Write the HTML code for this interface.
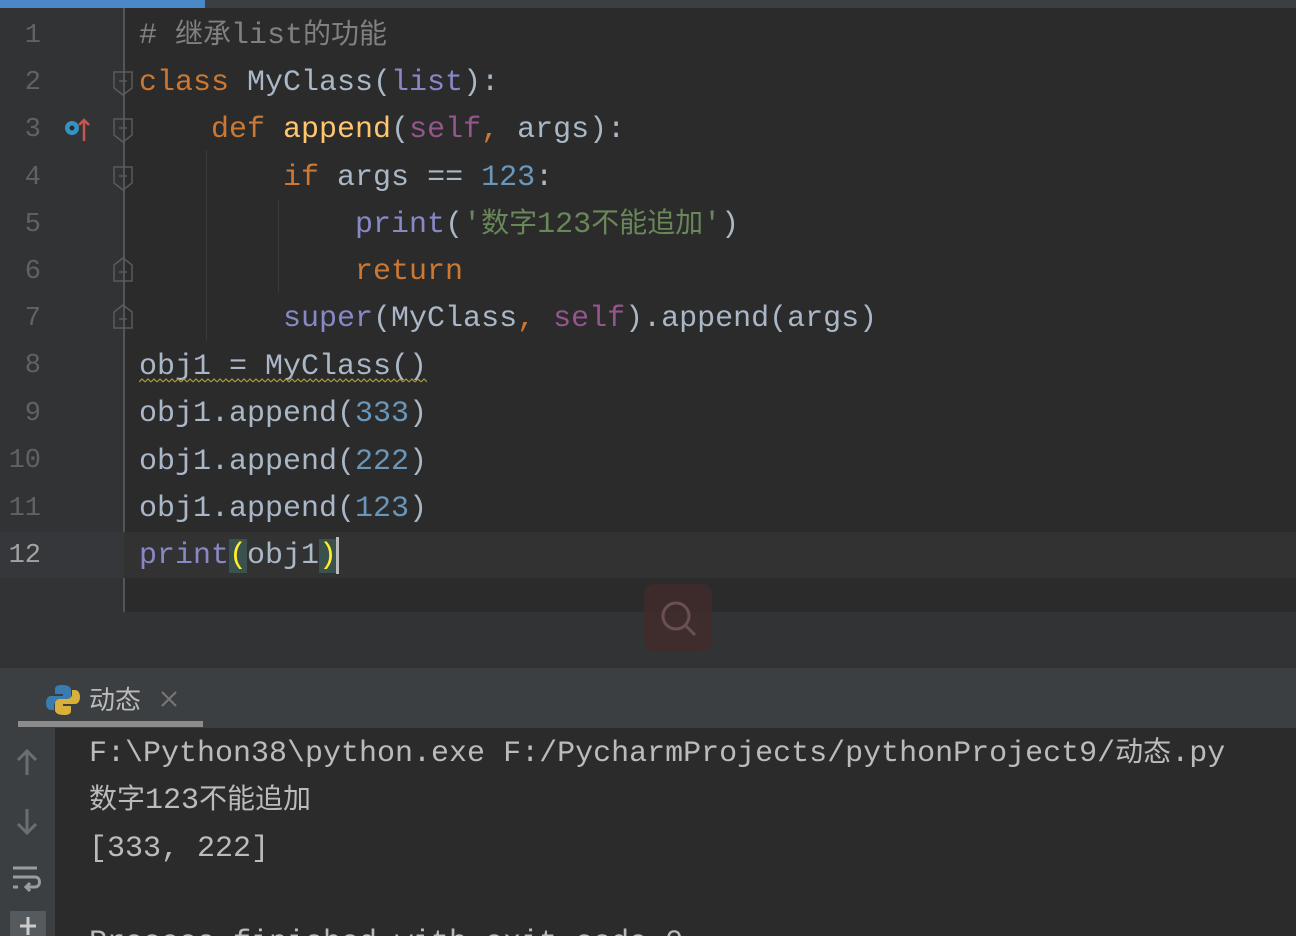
<!DOCTYPE html>
<html style="margin:0;height:936px;overflow:hidden"><head><meta charset="utf-8"><style>
body{margin:0;width:1296px;height:936px;overflow:hidden;background:#2b2b2b;position:relative;font-family:"Liberation Mono","Noto Sans CJK SC",monospace;}
.a{position:absolute}
.ln{position:absolute;left:0;width:41px;text-align:right;color:#606366;font-size:27px;font-family:"Liberation Mono",monospace;margin-top:3px}
.L{position:absolute;left:139px;font-size:30px;height:47px;line-height:47px;white-space:pre;color:#a9b7c6;margin-top:3px}
.k{color:#cc7832}.f{color:#ffc66d}.s{color:#94558d}.b{color:#8888c6}.n{color:#6897bb}.g{color:#6a8759}.c{color:#808080}
.cj{font-family:"Noto Sans CJK SC",sans-serif;font-size:28px;line-height:20px}
</style></head><body>
<div class="a" style="left:0;top:0;width:1296px;height:8px;background:#3c3f41"></div>
<div class="a" style="left:0;top:0;width:205px;height:8px;background:#4a88c7"></div>
<div class="a" style="left:0;top:8px;width:124px;height:604px;background:#313335"></div>
<div class="a" style="left:123px;top:8px;width:2px;height:604px;background:#555"></div>
<div class="a" style="left:0;top:532px;width:1296px;height:46px;background:#323232"></div>
<div class="a" style="left:0;top:532px;width:124px;height:46px;background:#35373a"></div>
<div class="a" style="left:206px;top:150px;width:1px;height:190px;background:#3b3b3b"></div>
<div class="a" style="left:278px;top:200px;width:1px;height:92px;background:#3b3b3b"></div>
<div class="ln" style="top:18px;">1</div>
<div class="ln" style="top:65px;">2</div>
<div class="ln" style="top:112px;">3</div>
<div class="ln" style="top:160px;">4</div>
<div class="ln" style="top:207px;">5</div>
<div class="ln" style="top:254px;">6</div>
<div class="ln" style="top:301px;">7</div>
<div class="ln" style="top:348px;">8</div>
<div class="ln" style="top:396px;">9</div>
<div class="ln" style="top:443px;">10</div>
<div class="ln" style="top:491px;">11</div>
<div class="ln" style="top:538px;color:#a4a3a3">12</div>
<svg class="a" style="left:60px;top:114px" width="34" height="30"><circle cx="12" cy="14" r="7" fill="#3592c4"/><circle cx="12" cy="14" r="2.5" fill="#2b2b2b"/><path d="M24 27V6M19 11l5-5 5 5" stroke="#c75450" stroke-width="2.5" fill="none"/></svg>
<svg class="a" style="left:112px;top:68px" width="24" height="270" fill="none" stroke="#5b5b5b" stroke-width="1.5">
<path d="M2 4h18v16l-9 7-9-7z M7 13h8"/><path d="M2 51h18v16l-9 7-9-7z M7 60h8"/><path d="M2 99h18v16l-9 7-9-7z M7 108h8"/>
<path d="M2 213h18v-16l-9-7-9 7z M7 204h8"/><path d="M2 260h18v-16l-9-7-9 7z M7 251h8"/></svg>
<div class="L" style="top:10px"><span class="c"># <span class="cj">继承</span>list<span class="cj">的功能</span></span></div>
<div class="L" style="top:57px"><span class="k">class</span> MyClass(<span class="b">list</span>):</div>
<div class="L" style="top:104px">    <span class="k">def</span> <span class="f">append</span>(<span class="s">self</span><span class="k">,</span> args):</div>
<div class="L" style="top:152px">        <span class="k">if</span> args == <span class="n">123</span>:</div>
<div class="L" style="top:199px">            <span class="b">print</span>(<span class="g">'<span class="cj">数字</span>123<span class="cj">不能追加</span>'</span>)</div>
<div class="L" style="top:246px">            <span class="k">return</span></div>
<div class="L" style="top:293px">        <span class="b">super</span>(MyClass<span class="k">,</span> <span class="s">self</span>).append(args)</div>
<div class="L" style="top:341px">obj1 = MyClass()</div>
<svg class="a" style="left:139px;top:378px" width="288" height="6"><defs><pattern id="w" width="6" height="6" patternUnits="userSpaceOnUse"><path d="M0 4l3-3 3 3" stroke="#a89b3a" stroke-width="1.2" fill="none"/></pattern></defs><rect width="288" height="6" fill="url(#w)"/></svg>
<div class="L" style="top:388px">obj1.append(<span class="n">333</span>)</div>
<div class="L" style="top:436px">obj1.append(<span class="n">222</span>)</div>
<div class="L" style="top:483px">obj1.append(<span class="n">123</span>)</div>
<div class="L" style="top:530px"><span class="b">print</span><span style="background:#3b514d;color:#ffef28">(</span>obj1<span style="background:#3b514d;color:#ffef28">)</span></div>
<div class="a" style="left:336px;top:537px;width:3px;height:37px;background:#bbb"></div>
<div class="a" style="left:0;top:612px;width:1296px;height:56px;background:#313335"></div>
<div class="a" style="left:644px;top:584px;width:68px;height:68px;background:#4a2a2a;border-radius:10px;opacity:.6"></div>
<svg class="a" style="left:656px;top:596px" width="44" height="44" fill="none" stroke="#6a5050" stroke-width="3"><circle cx="20" cy="20" r="13"/><path d="M30 30l9 9"/></svg>
<div class="a" style="left:0;top:668px;width:1296px;height:60px;background:#3c3f41"></div>
<div class="a" style="left:18px;top:721px;width:185px;height:6px;background:#8c8c8c"></div>
<svg class="a" style="left:46px;top:683px" width="34" height="34"><path d="M16 2c-7 0-7 3-7 5v4h8v2H5c-3 0-5 3-5 7s2 7 5 7h3v-4c0-3 2-5 5-5h7c3 0 5-2 5-5V7c0-3-3-5-9-5z" fill="#3a7cb0"/><path d="M18 32c7 0 7-3 7-5v-4h-8v-2h12c3 0 5-3 5-7s-2-7-5-7h-3v4c0 3-2 5-5 5h-7c-3 0-5 2-5 5v6c0 3 3 5 9 5z" fill="#d8b03a"/></svg>
<div class="a" style="left:89px;top:680px;font-size:26px;color:#bbb;font-family:'Noto Sans CJK SC',sans-serif">动态</div>
<svg class="a" style="left:160px;top:690px" width="18" height="18" stroke="#777" stroke-width="2"><path d="M2 2l14 14M16 2L2 16"/></svg>
<div class="a" style="left:0;top:728px;width:55px;height:208px;background:#3c3f41"></div>
<svg class="a" style="left:10px;top:745px" width="36" height="191" fill="none" stroke="#6b6e70" stroke-width="3"><path d="M17 30V6M8 15l9-9 9 9"/><path d="M17 64v24M8 79l9 9 9-9"/><path d="M3 123h24M3 132h22c6 0 6 10 0 10h-9M20 138l-4 4 4 4M3 142h5" stroke="#9a9da0"/><rect x="-4" y="166" width="48" height="40" rx="5" fill="#555a5e" stroke="none"/><path d="M18 172v18M10 181h16" stroke="#ccc"/></svg>
<div class="L" style="left:89px;top:728px;color:#bbbbbb">F:\Python38\python.exe F:/PycharmProjects/pythonProject9/<span class="cj">动态</span>.py</div>
<div class="L" style="left:89px;top:775px;color:#bbbbbb"><span class="cj">数字</span>123<span class="cj">不能追加</span></div>
<div class="L" style="left:89px;top:823px;color:#bbbbbb">[333, 222]</div>
<div class="L" style="left:89px;top:917px;color:#bbbbbb">Process finished with exit code 0</div>
</body></html>
